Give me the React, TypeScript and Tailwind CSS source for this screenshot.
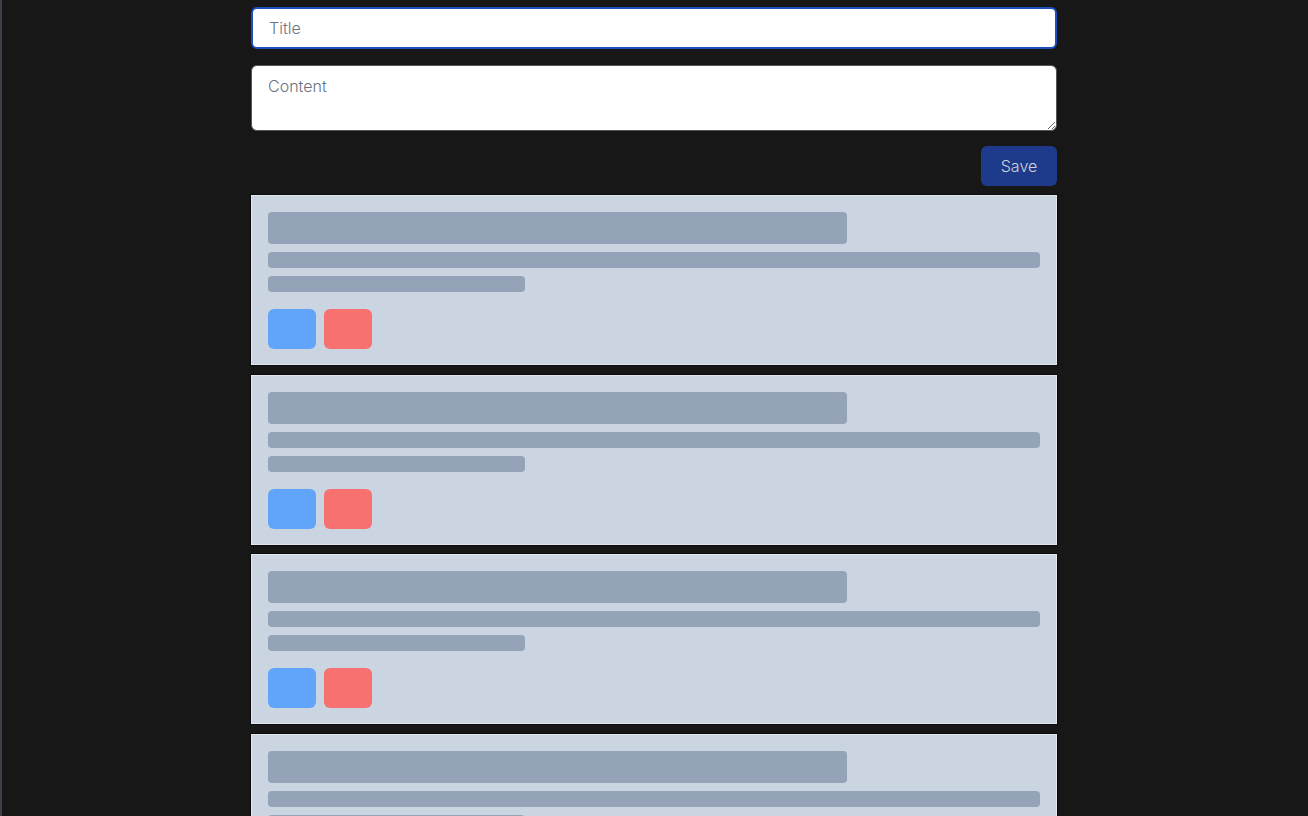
import React from "react";

function SkeletonCard() {
  return (
    <div className="border border-[#e2e8f0] bg-[#cbd5e1] p-4 pb-[15px] shadow-[0_0_0_1px_#0a0a0a]">
      <div className="h-8 w-3/4 rounded-sm bg-[#94a3b8]" />
      <div className="mt-2 h-4 w-full rounded-sm bg-[#94a3b8]" />
      <div className="mt-2 h-4 w-1/3 rounded-sm bg-[#94a3b8]" />
      <div className="mt-[17px] flex gap-2">
        <div className="h-10 w-12 rounded-md bg-[#60a5fa]" />
        <div className="h-10 w-12 rounded-md bg-[#f87171]" />
      </div>
    </div>
  );
}

export default function App() {
  return (
    <div className="h-[816px] overflow-hidden border-l-2 border-[#3b4048] bg-[#171717] font-['Inter',sans-serif]">
      <div className="mx-auto w-[806px] -translate-x-[1px] pt-[7px]">
        <input
          autoFocus
          placeholder="Title"
          className="block h-[42px] w-full rounded-md border-2 border-[#1e4fc0] bg-white px-4 text-base font-light text-gray-800 placeholder:text-[#6b7280] outline-none"
        />
        <textarea
          placeholder="Content"
          className="mt-4 block h-[66px] w-full rounded-md border border-[#555] bg-white px-4 pt-2 text-base font-light text-gray-800 placeholder:text-[#6b7280] outline-none"
        />
        <div className="mt-[15px] flex justify-end">
          <button className="h-10 w-[76px] rounded-md bg-[#1e3a8a] text-base font-light text-[#d1d5db]">
            Save
          </button>
        </div>
        <div className="mt-[9px] flex flex-col gap-[9.5px]">
          <SkeletonCard />
          <SkeletonCard />
          <SkeletonCard />
          <SkeletonCard />
        </div>
      </div>
    </div>
  );
}
